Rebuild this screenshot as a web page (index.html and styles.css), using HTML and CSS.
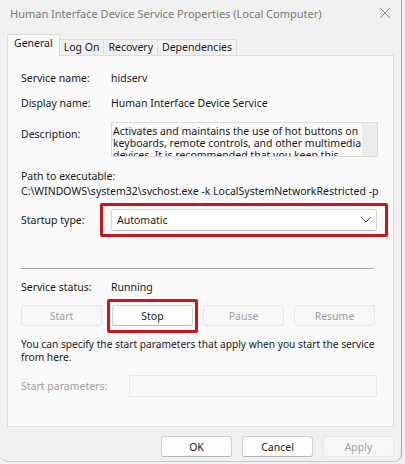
FILE: index.html
```html
<!DOCTYPE html>
<html lang="en">
<head>
    <meta charset="UTF-8">
    <meta name="viewport" content="width=device-width, initial-scale=1.0">
    <title>Human Interface Device Service Properties</title>
    <link rel="stylesheet" href="styles.css">
</head>
<body>
    <div class="window">
        <div class="titlebar">
            <span class="title">Human Interface Device Service Properties (Local Computer)</span>
            <svg class="close" width="12" height="12" viewBox="0 0 12 12">
                <path d="M1 1 L11 11 M11 1 L1 11" stroke="#8a8a8a" stroke-width="1"/>
            </svg>
        </div>
        <div class="tabs">
            <div class="tab active">General</div>
            <div class="tab">Log On</div>
            <div class="tab">Recovery</div>
            <div class="tab">Dependencies</div>
        </div>
        <div class="panel">
            <div class="row first">
                <div class="label">Service name:</div>
                <div class="value">hidserv</div>
            </div>
            <div class="row gap">
                <div class="label">Display name:</div>
                <div class="value">Human Interface Device Service</div>
            </div>
            <div class="row desc-row">
                <div class="label desc-label">Description:</div>
                <div class="desc-box">
                    <div class="desc-text">Activates and maintains the use of hot buttons on keyboards, remote controls, and other multimedia devices. It is recommended that you keep this service running.</div>
                    <div class="scrollbar"></div>
                </div>
            </div>
            <div class="path-label">Path to executable:</div>
            <div class="path">C:\WINDOWS\system32\svchost.exe -k LocalSystemNetworkRestricted -p</div>
            <div class="row startup-row">
                <div class="label">Startup type:</div>
                <div class="select highlight">
                    <span>Automatic</span>
                    <svg width="10" height="6" viewBox="0 0 10 6">
                        <path d="M0.5 0.5 L5 5 L9.5 0.5" fill="none" stroke="#555" stroke-width="1"/>
                    </svg>
                </div>
            </div>
            <div class="separator"></div>
            <div class="row status-row">
                <div class="label">Service status:</div>
                <div class="value">Running</div>
            </div>
            <div class="buttons">
                <button class="btn disabled">Start</button>
                <button class="btn highlight">Stop</button>
                <button class="btn disabled">Pause</button>
                <button class="btn disabled">Resume</button>
            </div>
            <p class="hint">You can specify the start parameters that apply when you start the service from here.</p>
            <div class="row params-row">
                <div class="label params-label">Start parameters:</div>
                <div class="params-input"></div>
            </div>
        </div>
        <div class="footer">
            <button class="btn">OK</button>
            <button class="btn">Cancel</button>
            <button class="btn disabled">Apply</button>
        </div>
    </div>
</body>
</html>
```

FILE: styles.css
```css
body {
    margin: 0;
    background-color: #f0f0f0;
    font-family: "Noto Sans", "Open Sans", sans-serif;
    font-size: 10.5px;
    color: #1a1a1a;
}
.window {
    width: 402px;
    height: 462px;
    border-right: 1px solid #a8a8a8;
    border-bottom: 1px solid #c8c8c8;
    border-bottom-left-radius: 8px;
    border-bottom-right-radius: 8px;
    box-sizing: border-box;
}
.titlebar {
    height: 26px;
    display: flex;
    align-items: center;
    justify-content: space-between;
    padding-left: 10px;
    padding-right: 10px;
}
.title {
    color: #7a7a7a;
    font-size: 11px;
}
.tabs {
    display: flex;
    align-items: flex-end;
    height: 29px;
    margin-left: 7px;
    position: relative;
    z-index: 1;
}
.tab {
    height: 15px;
    line-height: 14px;
    padding: 0 4px;
    border: 1px solid #dcdcdc;
    border-bottom: none;
    margin-left: -1px;
    background-color: #f0f0f0;
    font-size: 10.5px;
}
.tab.active {
    height: 21px;
    line-height: 16px;
    margin-left: 0;
    padding: 0 6px;
    background-color: #f9f9f9;
    margin-bottom: -1px;
}
.panel {
    margin-left: 7px;
    width: 387px;
    height: 372px;
    box-sizing: border-box;
    border: 1px solid #dcdcdc;
    background-color: #f9f9f9;
    padding: 15px 13px 0 13px;
}
.row {
    display: flex;
    align-items: center;
    line-height: 14px;
}
.label {
    width: 90px;
    flex-shrink: 0;
}
.gap {
    margin-top: 11px;
}
.desc-row {
    margin-top: 12px;
    align-items: flex-start;
}
.desc-label {
    margin-top: 5px;
}
.desc-box {
    width: 267px;
    height: 35px;
    box-sizing: border-box;
    border: 1px solid #dadada;
    background-color: #fbfbfb;
    display: flex;
    overflow: hidden;
}
.desc-text {
    flex: 1;
    padding: 2px 0 0 1px;
    line-height: 12px;
}
.scrollbar {
    width: 15px;
    background-color: #ececec;
}
.path-label {
    margin-top: 12px;
    line-height: 14px;
}
.path {
    line-height: 14px;
    margin-top: 1px;
    white-space: nowrap;
}
.startup-row {
    margin-top: 11px;
}
.select {
    width: 266px;
    height: 22px;
    box-sizing: border-box;
    border: 1px solid #d6d6d6;
    border-bottom-color: #bcbcbc;
    border-radius: 3px;
    background-color: #ffffff;
    display: flex;
    align-items: center;
    justify-content: space-between;
    padding: 0 5px 0 5px;
}
.highlight {
    position: relative;
}
.highlight::after {
    content: "";
    position: absolute;
    border: 3px solid #c8141c;
    border-radius: 2px;
}
.select.highlight::after {
    top: -7px;
    bottom: -7px;
    left: -12px;
    right: -12px;
}
.separator {
    margin-top: 37px;
    height: 1px;
    width: 353px;
    background-color: #a8a8a8;
}
.status-row {
    margin-top: 11px;
}
.buttons {
    display: flex;
    gap: 10px;
    margin-top: 11px;
}
.btn {
    width: 81px;
    height: 21px;
    box-sizing: border-box;
    border: 1px solid #d0d0d0;
    border-bottom-color: #b8b8b8;
    border-radius: 3px;
    background-color: #fdfdfd;
    font-family: inherit;
    font-size: 10.5px;
    color: #1a1a1a;
    padding: 0;
}
.btn.disabled {
    border-color: #e6e6e6;
    background-color: #f7f7f7;
    color: #a0a0a0;
}
.btn.highlight::after {
    top: -7px;
    bottom: -8px;
    left: -6px;
    right: -6px;
}
.hint {
    margin: 12px -12px 0 0;
    line-height: 13px;
    font-size: 10.2px;
}
.params-row {
    margin-top: 11px;
}
.params-label {
    width: 108px;
    color: #a0a0a0;
}
.params-input {
    width: 248px;
    height: 22px;
    box-sizing: border-box;
    border: 1px solid #e8e8e8;
    background-color: #f9f9f9;
}
.footer {
    display: flex;
    justify-content: flex-end;
    gap: 10px;
    margin-top: 9px;
    padding-right: 7px;
}
.footer .btn {
    width: 71px;
}
```
